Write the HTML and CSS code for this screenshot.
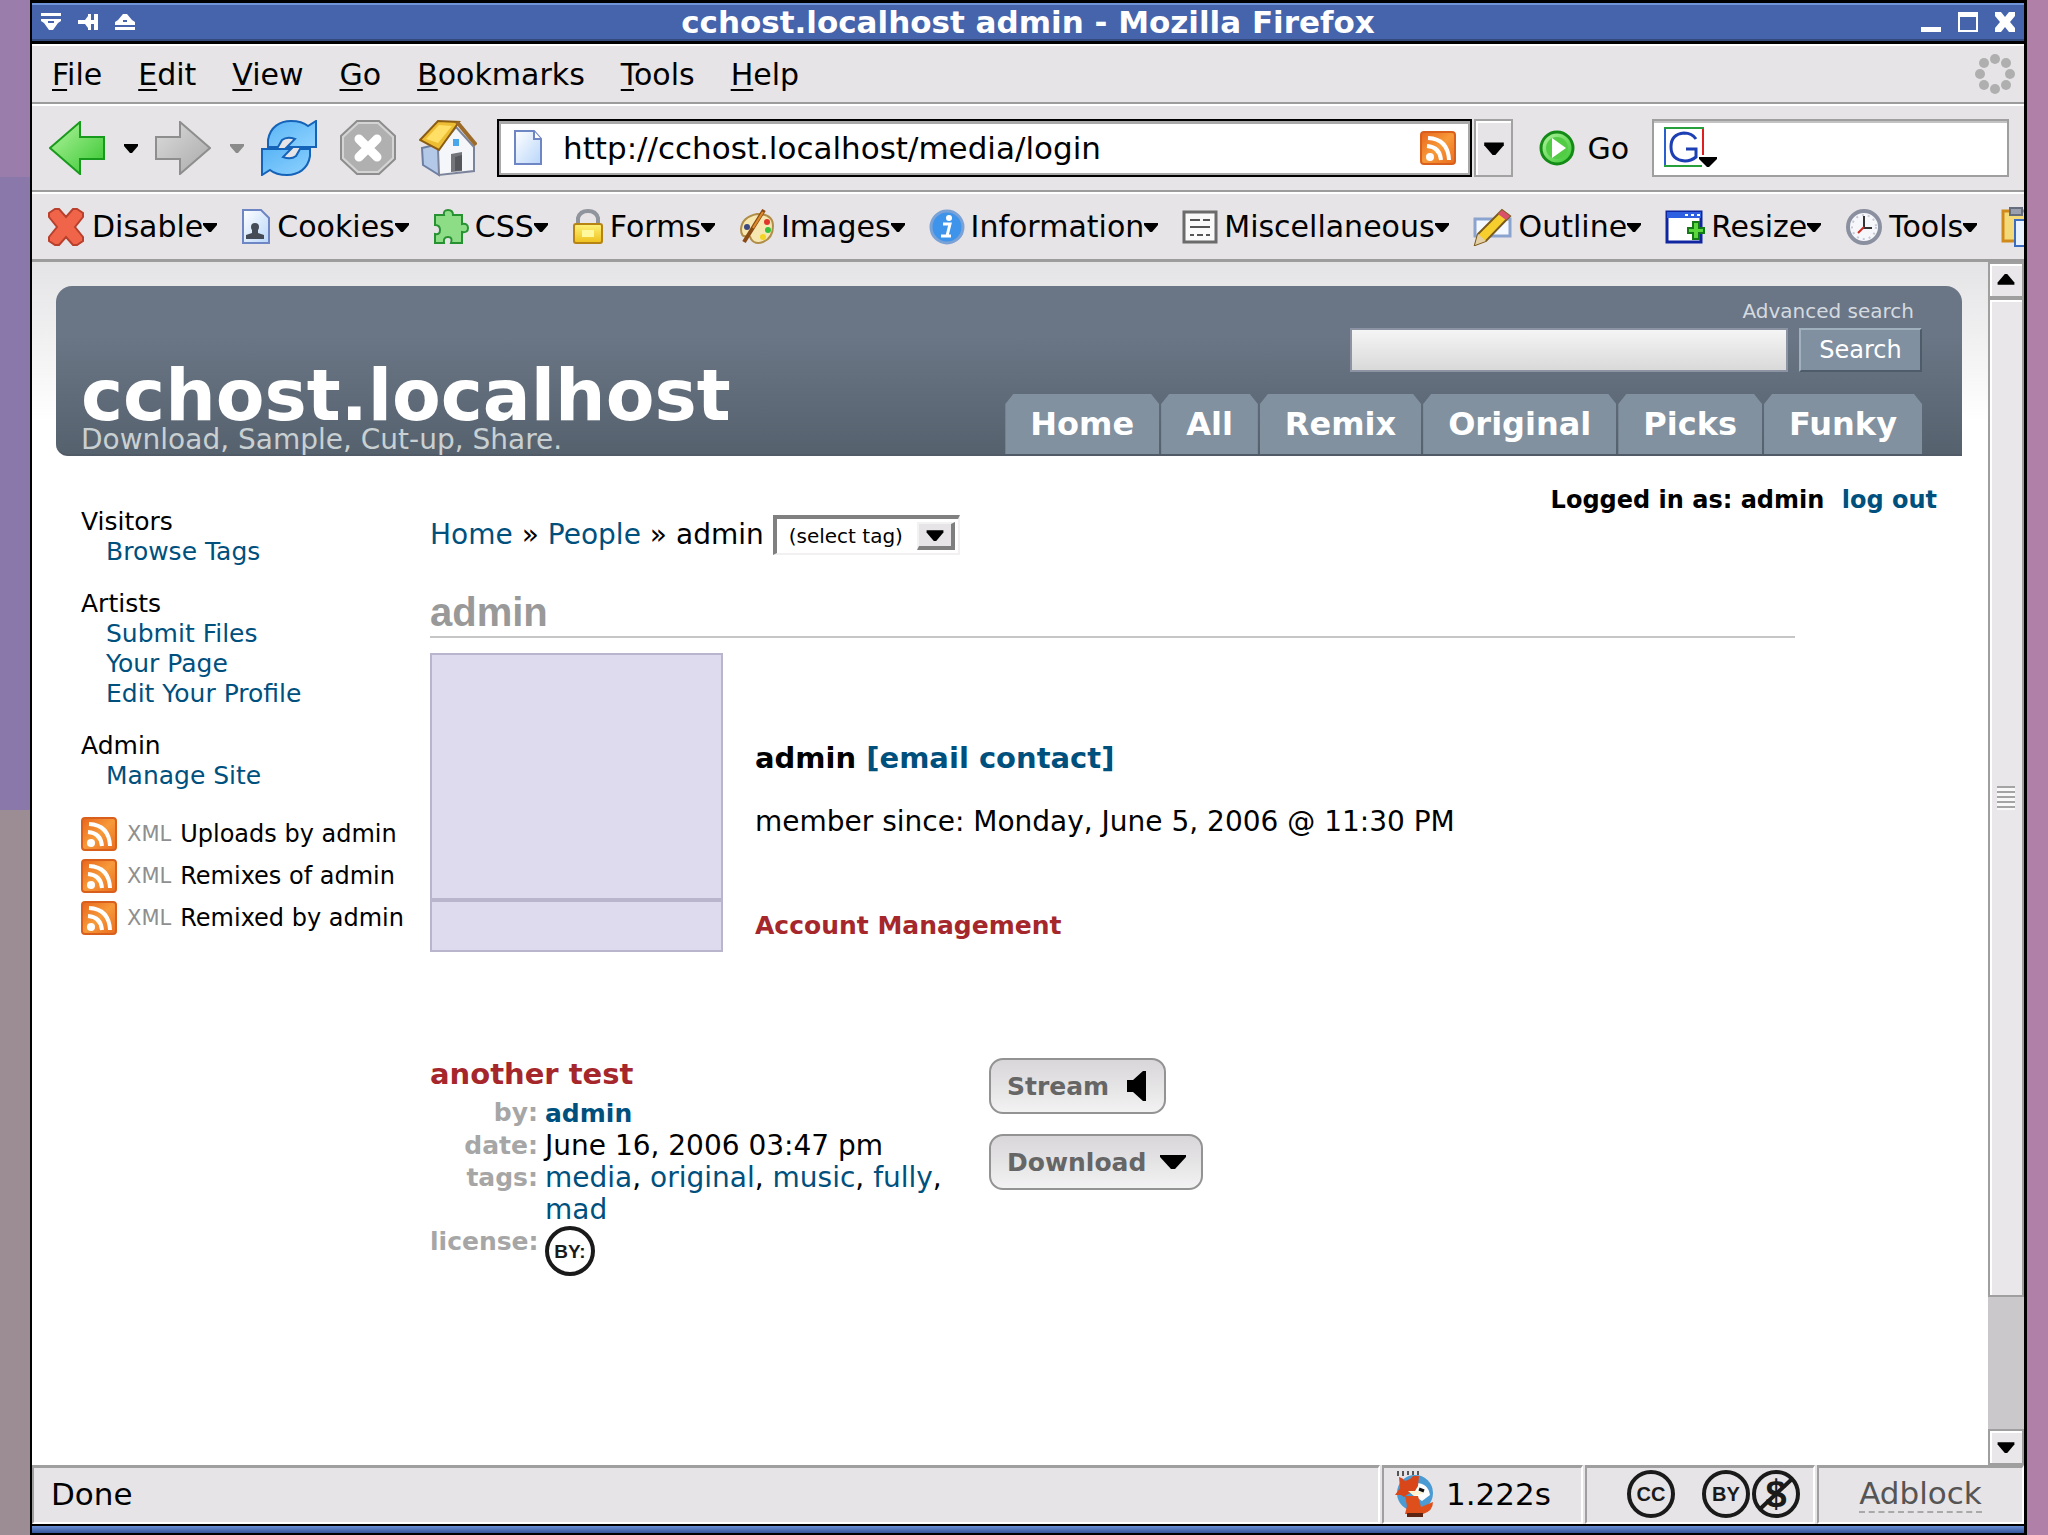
FILE: index.html
```html
<!DOCTYPE html>
<html lang="en">

<head>
    <meta charset="UTF-8">
    <meta name="viewport" content="width=device-width, initial-scale=1.0">
    <title>cchost.localhost admin</title>
    <link rel="stylesheet" href="styles.css">
</head>

<body>
    <!-- shared shapes -->
    <svg class="defs" width="0" height="0" aria-hidden="true">
        <defs>
            <linearGradient id="green" x1="0" y1="0" x2="1" y2="1">
                <stop offset="0" stop-color="#b4f5a0" />
                <stop offset="1" stop-color="#35c52e" />
            </linearGradient>
            <linearGradient id="grey" x1="0" y1="0" x2="1" y2="1">
                <stop offset="0" stop-color="#dcdcdc" />
                <stop offset="1" stop-color="#a9a9a9" />
            </linearGradient>
            <linearGradient id="blue" x1="0" y1="0" x2="1" y2="1">
                <stop offset="0" stop-color="#58b4f5" />
                <stop offset="1" stop-color="#8fd2ff" />
            </linearGradient>
            <linearGradient id="orange" x1="0" y1="0" x2="1" y2="1">
                <stop offset="0" stop-color="#e8651c" />
                <stop offset=".5" stop-color="#f79a3a" />
                <stop offset="1" stop-color="#ea6c1e" />
            </linearGradient>
            <linearGradient id="paper" x1="0" y1="0" x2="1" y2="1">
                <stop offset="0" stop-color="#ffffff" />
                <stop offset="1" stop-color="#b9d6fa" />
            </linearGradient>
            <linearGradient id="gold" x1="0" y1="0" x2="0" y2="1">
                <stop offset="0" stop-color="#fff27a" />
                <stop offset="1" stop-color="#eec01c" />
            </linearGradient>
        </defs>
        <symbol id="down" viewBox="0 0 14 10">
            <path d="M0 1h14v2L8 10H6L0 3z" />
        </symbol>
        <symbol id="rss" viewBox="0 0 36 34">
            <rect x="1" y="1" width="34" height="32" rx="3" fill="url(#orange)" stroke="#d9601c" stroke-width="2" />
            <circle cx="10" cy="26" r="4" fill="#fff" />
            <path d="M7 15q13 1 14 14M8 7q20 1 21 22" fill="none" stroke="#fff" stroke-width="4" />
        </symbol>
    </svg>

    <div class="window">
        <div class="titlebar">
            <div class="title-buttons">
                <button type="button" aria-label="Window menu"><svg width="20" height="18" viewBox="0 0 20 18"><path d="M0 0h20v3H0zM0 6h20v2l-3 2-5 7H8l-5-7-3-2zM7 8v2h6V8z" fill="#fff" fill-rule="evenodd" /></svg></button>
                <button type="button" aria-label="Stick"><svg width="20" height="18" viewBox="0 0 20 18"><path d="M0 7h7l3-4V1h3v6h3V1h4v16h-4v-6h-3v6h-3v-2l-3-4H0z" fill="#fff" /></svg></button>
                <button type="button" aria-label="Shade"><svg width="20" height="18" viewBox="0 0 20 18"><path d="M8 1h4l5 6 3 2v3H0V9l3-2zM8 7v2h4V7zM0 14h20v3H0z" fill="#fff" fill-rule="evenodd" /></svg></button>
            </div>
            <div class="title-text">cchost.localhost admin - Mozilla Firefox</div>
            <div class="title-buttons right">
                <button type="button" aria-label="Minimize"><svg width="20" height="20" viewBox="0 0 20 20"><path d="M0 15h20v5H0z" fill="#fff" /></svg></button>
                <button type="button" aria-label="Maximize"><svg width="20" height="20" viewBox="0 0 20 20"><path d="M0 0h20v20H0zM2 5v13h16V5z" fill="#fff" fill-rule="evenodd" /></svg></button>
                <button type="button" aria-label="Close"><svg width="20" height="20" viewBox="0 0 20 20"><path d="M0 0h6l4 5 4-5h6v4l-5 6 5 6v4h-6l-4-5-4 5H0v-4l5-6-5-6z" fill="#fff" /></svg></button>
            </div>
        </div>

        <div class="menubar">
            <a href="#"><u>F</u>ile</a>
            <a href="#"><u>E</u>dit</a>
            <a href="#"><u>V</u>iew</a>
            <a href="#"><u>G</u>o</a>
            <a href="#"><u>B</u>ookmarks</a>
            <a href="#"><u>T</u>ools</a>
            <a href="#"><u>H</u>elp</a>
            <svg class="throbber" width="40" height="40" viewBox="0 0 40 40" fill="#b0afb0">
                <circle cx="20" cy="5" r="5" /><circle cx="31" cy="9" r="5" /><circle cx="35" cy="20" r="5" /><circle cx="31" cy="31" r="5" />
                <circle cx="20" cy="35" r="5" /><circle cx="9" cy="31" r="5" /><circle cx="5" cy="20" r="5" /><circle cx="9" cy="9" r="5" />
            </svg>
        </div>

        <div class="toolbar">
            <button type="button" class="nav-btn" aria-label="Back">
                <svg width="56" height="54" viewBox="0 0 56 54"><path d="M1 27 31 1v15h24v22H31v15z" fill="url(#green)" stroke="#189a1c" stroke-width="2" /></svg>
                <svg class="arrow" width="14" height="10"><use href="#down" /></svg>
            </button>
            <button type="button" class="nav-btn off" aria-label="Forward">
                <svg width="56" height="54" viewBox="0 0 56 54"><path d="M55 27 25 1v15H1v22h24v15z" fill="url(#grey)" stroke="#8e8e8e" stroke-width="2" /></svg>
                <svg class="arrow" width="14" height="10"><use href="#down" /></svg>
            </button>
            <div class="nav-icons">
                <button type="button" aria-label="Reload">
                    <svg width="56" height="56" viewBox="0 0 56 56" fill="url(#blue)" stroke="#1463b8" stroke-width="2">
                        <path d="M7 27V20C9 7 19 1 30 1q11 0 17 5l8-5v26H26l8-8q-8-3-13 1l-4 7z" />
                        <path d="M49 29v7C47 49 37 55 26 55q-11 0-17-5l-8 5V29h29l-8 8q8 3 13-1l4-7z" />
                    </svg>
                </button>
                <button type="button" aria-label="Stop">
                    <svg width="56" height="56" viewBox="0 0 56 56">
                        <path d="M17 1h22l16 15v23L39 54H17L1 39V16z" fill="#b0b0b0" stroke="#8d8d8d" stroke-width="2" />
                        <path d="M18 3h20l15 14v21L38 52H18L3 38V17z" fill="none" stroke="#d4d4d4" stroke-width="2" />
                        <path d="m19 19 18 18m0-18L19 37" stroke="#fff" stroke-width="9" stroke-linecap="round" />
                    </svg>
                </button>
                <button type="button" aria-label="Home">
                    <svg width="58" height="58" viewBox="0 0 58 58">
                        <path d="M3 29 20 25v31L4 46z" fill="#b4c9e8" stroke="#6c7fa3" stroke-width="2" />
                        <path d="m19 30 18-22 18 20v24l-35 4z" fill="#f5f6fa" stroke="#7b849b" stroke-width="2" />
                        <path d="M1 21 19 2l21 1-20 28z" fill="#edbd33" stroke="#8b5d14" stroke-width="2" />
                        <path d="M7 20 20 6l13 1-14 17z" fill="#ffdf66" />
                        <path d="m38 3 19 23" stroke="#9c6b2a" stroke-width="4" />
                        <path d="M32 53V35l11-2v19z" fill="#73757b" />
                        <path d="M36 52V38l7-2v15z" fill="#55575c" />
                        <path d="M34 20h6v7h-6z" fill="#48a6ea" />
                    </svg>
                </button>
            </div>
            <div class="urlbar">
                <svg width="30" height="36" viewBox="0 0 30 36"><path d="M2 1h19l7 8v25H2z" fill="url(#paper)" stroke="#6f86c4" stroke-width="2" /><path d="M21 1v8h7" fill="#fff" stroke="#6f86c4" stroke-width="2" /></svg>
                <input type="text" aria-label="Location" value="http://cchost.localhost/media/login">
                <svg width="36" height="36"><use href="#rss" /></svg>
            </div>
            <button type="button" class="url-drop" aria-label="Show history"><svg width="22" height="14"><use href="#down" /></svg></button>
            <button type="button" class="go">
                <svg width="36" height="36" viewBox="0 0 36 36"><circle cx="18" cy="18" r="16" fill="url(#green)" stroke="#148a17" stroke-width="3" /><circle cx="18" cy="18" r="11" fill="#52cc45" /><path d="m13 8 14 10-14 10z" fill="#fff" /></svg>
                Go
            </button>
            <div class="searchbar">
                <svg width="54" height="42" viewBox="0 0 54 42">
                    <path d="M1 1v38" stroke="#2a5fd0" stroke-width="2" />
                    <path d="M0 1h40M0 39h38" stroke="#25a03a" stroke-width="2" />
                    <path d="M39 2v26" stroke="#e02020" stroke-width="2" />
                    <path d="M32 12Q28 6 20 6 7 7 7 20t14 14q6 0 11-4V22H22" fill="none" stroke="#1d3fb4" stroke-width="3" />
                    <path d="M35 30h18v2l-8 8h-2l-8-8z" />
                </svg>
                <input type="text" aria-label="Google search">
            </div>
        </div>

        <div class="devbar">
            <button type="button">
                <svg width="40" height="40" viewBox="0 0 40 40"><path d="M3 6 9 2h4l7 8 7-8h4l6 4v4l-8 10 8 10v4l-6 4h-4l-7-8-7 8H9l-6-4v-4l8-10-8-10z" fill="#f0654a" stroke="#b8402c" stroke-width="2" /></svg>
                Disable<svg class="arrow" width="14" height="10"><use href="#down" /></svg>
            </button>
            <button type="button">
                <svg width="30" height="36" viewBox="0 0 30 36"><path d="M2 1h18l8 8v25H2z" fill="url(#paper)" stroke="#6f86c4" stroke-width="2" /><circle cx="14" cy="18" r="4" fill="#444b57" /><path d="M11 20h6v4l6 2v4H5v-4l6-2z" fill="#444b57" /></svg>
                Cookies<svg class="arrow" width="14" height="10"><use href="#down" /></svg>
            </button>
            <button type="button">
                <svg width="36" height="36" viewBox="0 0 36 36"><path d="M2 6h9q-1-5 4-5t5 5h9v9q6-1 6 4t-6 4v11H18q2-6-3-6t-4 6H2V25q5 1 5-4t-5-5z" fill="#8ddc86" stroke="#279232" stroke-width="2" /></svg>
                CSS<svg class="arrow" width="14" height="10"><use href="#down" /></svg>
            </button>
            <button type="button">
                <svg width="32" height="36" viewBox="0 0 32 36"><path d="M6 17V9q2-7 10-7t10 7v8" fill="none" stroke="#8f949d" stroke-width="4" /><rect x="2" y="15" width="28" height="19" rx="2" fill="url(#gold)" stroke="#b58412" stroke-width="2" /><path d="M10 21h12v7H10z" fill="#fff89c" /></svg>
                Forms<svg class="arrow" width="14" height="10"><use href="#down" /></svg>
            </button>
            <button type="button">
                <svg width="36" height="36" viewBox="0 0 36 36"><path d="M18 5Q3 8 2 20q0 9 6 7 3-1 4 3 4 6 12 3 10-4 10-16T18 5z" fill="#f6e7b0" stroke="#b08d48" stroke-width="2" /><circle cx="8" cy="18" r="3" fill="#3d4a80" /><circle cx="28" cy="13" r="3" fill="#e1362b" /><circle cx="29" cy="21" r="3" fill="#3abf3b" /><circle cx="24" cy="28" r="3" fill="#f4d321" /><path d="M25 1 5 33" stroke="#8a4a14" stroke-width="4" /><path d="M24 3 14 19" stroke="#e08b2c" stroke-width="2" /></svg>
                Images<svg class="arrow" width="14" height="10"><use href="#down" /></svg>
            </button>
            <button type="button">
                <svg width="36" height="36" viewBox="0 0 36 36"><circle cx="18" cy="18" r="16" fill="#3e94ea" stroke="#7aa2d6" stroke-width="3" /><circle cx="20" cy="9" r="3" fill="#fff" /><path d="M14 15h7l-3 12h4M12 27h10" fill="none" stroke="#fff" stroke-width="3" /></svg>
                Information<svg class="arrow" width="14" height="10"><use href="#down" /></svg>
            </button>
            <button type="button">
                <svg width="36" height="34" viewBox="0 0 36 34"><path d="M2 2h32v30H2z" fill="#fafafa" stroke="#6b6b6b" stroke-width="3" /><path d="M8 10h10m3 0h7M8 17h20M8 25h4m3 0h6m3 0h4" stroke="#555" stroke-width="2" /></svg>
                Miscellaneous<svg class="arrow" width="14" height="10"><use href="#down" /></svg>
            </button>
            <button type="button">
                <svg width="40" height="38" viewBox="0 0 40 38"><path d="M2 11h35v17H2z" fill="#f4f8ff" stroke="#8ba4cf" stroke-width="3" /><path d="m2 37 3-11L29 2l8 6-24 25z" fill="#f6cf2e" stroke="#7a5a1a" stroke-width="2" /><path d="m29 2 8 6-4 4-8-6z" fill="#d8506a" /><path d="m2 37 3-11 8 7z" fill="#e5cfa4" /></svg>
                Outline<svg class="arrow" width="14" height="10"><use href="#down" /></svg>
            </button>
            <button type="button">
                <svg width="40" height="34" viewBox="0 0 40 34"><path d="M2 2h34v30H2z" fill="#fff" stroke="#1026a0" stroke-width="3" /><path d="M2 2h34v6H2z" fill="#2d5fe0" /><path d="M20 5h3m3 0h3m3 0h3" stroke="#fff" stroke-width="2" /><path d="M28 12h6v6h5v5h-5v6h-6v-6h-5v-5h5z" fill="#5ad63e" stroke="#147a18" stroke-width="2" /></svg>
                Resize<svg class="arrow" width="14" height="10"><use href="#down" /></svg>
            </button>
            <button type="button">
                <svg width="38" height="38" viewBox="0 0 38 38"><circle cx="19" cy="19" r="16" fill="#f6f7fb" stroke="#8b90a0" stroke-width="4" /><circle cx="19" cy="19" r="12" fill="none" stroke="#c5cad6" stroke-width="2" stroke-dasharray="2 4" /><path d="M19 8v12h8" fill="none" stroke="#333" stroke-width="2" /><path d="m19 19-6 6" stroke="#cc2a1e" stroke-width="2" /></svg>
                Tools<svg class="arrow" width="14" height="10"><use href="#down" /></svg>
            </button>
            <button type="button" aria-label="View source">
                <svg width="34" height="40" viewBox="0 0 34 40"><path d="M2 4h30v30H2z" fill="#f4d978" stroke="#d08a1c" stroke-width="3" /><path d="M9 1h12v7H9z" fill="#9aa0ad" stroke="#666d7c" stroke-width="2" /><path d="M14 13h20v26H14z" fill="#e8f3ff" stroke="#3a6cc0" stroke-width="2" /></svg>
            </button>
        </div>

        <div class="viewport">
            <div class="page">
                <div class="header">
                    <div class="brand">
                        <div class="site-title">cchost.localhost</div>
                        <div class="tagline">Download, Sample, Cut-up, Share.</div>
                    </div>
                    <div class="header-right">
                        <a class="advanced" href="#">Advanced search</a>
                        <form class="site-search">
                            <input type="text" aria-label="Search text">
                            <button type="button">Search</button>
                        </form>
                        <div class="tabs">
                            <a href="#">Home</a>
                            <a href="#">All</a>
                            <a href="#">Remix</a>
                            <a href="#">Original</a>
                            <a href="#">Picks</a>
                            <a href="#">Funky</a>
                        </div>
                    </div>
                </div>

                <div class="content">
                    <div class="sidebar">
                        <div class="menu-group">
                            <p>Visitors</p>
                            <ul>
                                <li><a href="#">Browse Tags</a></li>
                            </ul>
                        </div>
                        <div class="menu-group">
                            <p>Artists</p>
                            <ul>
                                <li><a href="#">Submit Files</a></li>
                                <li><a href="#">Your Page</a></li>
                                <li><a href="#">Edit Your Profile</a></li>
                            </ul>
                        </div>
                        <div class="menu-group">
                            <p>Admin</p>
                            <ul>
                                <li><a href="#">Manage Site</a></li>
                            </ul>
                        </div>
                        <div class="feeds">
                            <a href="#"><svg width="36" height="34"><use href="#rss" /></svg><span>XML</span>Uploads by admin</a>
                            <a href="#"><svg width="36" height="34"><use href="#rss" /></svg><span>XML</span>Remixes of admin</a>
                            <a href="#"><svg width="36" height="34"><use href="#rss" /></svg><span>XML</span>Remixed by admin</a>
                        </div>
                    </div>

                    <div class="main">
                        <div class="login-info">Logged in as: admin <a href="#">log out</a></div>
                        <div class="crumbs">
                            <a href="#">Home</a> <span>»</span> <a href="#">People</a> <span>»</span> <span>admin</span>
                            <div class="select-box">
                                <select aria-label="Tag">
                                    <option>(select tag)</option>
                                </select>
                                <i><svg width="18" height="12"><use href="#down" /></svg></i>
                            </div>
                        </div>
                        <h1>admin</h1>

                        <div class="profile">
                            <div class="avatar">
                                <div class="avatar-pic"></div>
                                <div class="avatar-foot"></div>
                            </div>
                            <div class="profile-text">
                                <h2>admin <a href="#">[email contact]</a></h2>
                                <p>member since: Monday, June 5, 2006 @ 11:30 PM</p>
                                <a class="account" href="#">Account Management</a>
                            </div>
                        </div>

                        <div class="record">
                            <div class="record-info">
                                <h2><a href="#">another test</a></h2>
                                <dl>
                                    <dt>by:</dt>
                                    <dd><a class="strong" href="#">admin</a></dd>
                                    <dt>date:</dt>
                                    <dd>June 16, 2006 03:47 pm</dd>
                                    <dt>tags:</dt>
                                    <dd><a href="#">media</a>, <a href="#">original</a>, <a href="#">music</a>, <a href="#">fully</a>, <a href="#">mad</a></dd>
                                    <dt>license:</dt>
                                    <dd>
                                        <svg class="cc" width="50" height="50" viewBox="0 0 50 50"><circle cx="25" cy="25" r="23" /><text x="25" y="32" font-size="19">BY:</text></svg>
                                    </dd>
                                </dl>
                            </div>
                            <div class="record-buttons">
                                <button type="button">Stream <svg width="26" height="30" viewBox="0 0 26 30"><path d="M4 9h6L20 0h3v30h-3l-10-9H4z" /></svg></button>
                                <button type="button">Download <svg width="26" height="16" viewBox="0 0 26 16"><path d="M0 1h26v2L15 15h-4L0 3z" /></svg></button>
                            </div>
                        </div>
                    </div>
                </div>
            </div>

            <div class="scrollbar">
                <button type="button" aria-label="Scroll up"><svg class="flip" width="18" height="12"><use href="#down" /></svg></button>
                <div class="thumb"><i></i></div>
                <div class="trough"></div>
                <button type="button" aria-label="Scroll down"><svg width="18" height="12"><use href="#down" /></svg></button>
            </div>
        </div>

        <div class="statusbar">
            <div class="cell done">Done</div>
            <div class="cell timer">
                <svg width="40" height="46" viewBox="0 0 40 46">
                    <circle cx="21" cy="22" r="18" fill="#4a9ad4" />
                    <path d="M22 12q12 0 14 12l-8 6-10-7z" fill="#fff" />
                    <path d="M5 6q4 1 6 4 6-2 8-5h6l-1 10-3 5-7 3-4 3-3-2H1l5-7z" fill="#d8461a" />
                    <path d="M4 0v5m5-5v5m5-5v4m5-4v4m5-4v4" stroke="#555" stroke-width="2" />
                    <path d="M14 20h10l6 2-10 3z" fill="#fff4d0" />
                    <path d="m25 18 5 2" stroke="#111" stroke-width="3" />
                    <path d="M11 25h13l3 11 12-5q0 9-10 12H11l2-8z" fill="#df4f1c" />
                    <path d="M13 42h16v4H13z" fill="#5b2413" />
                </svg>
                1.222s
            </div>
            <div class="cell license">
                <svg class="cc" width="50" height="50" viewBox="0 0 50 50"><circle cx="25" cy="25" r="22" /><text x="25" y="32" font-size="20">CC</text></svg>
                <div>
                    <svg class="cc" width="50" height="50" viewBox="0 0 50 50"><circle cx="25" cy="25" r="22" /><text x="25" y="32" font-size="20">BY</text></svg><svg class="cc" width="50" height="50" viewBox="0 0 50 50"><circle cx="25" cy="25" r="22" /><path d="m9 40 32-30" /><text x="25" y="38" font-size="38">$</text></svg>
                </div>
            </div>
            <div class="cell adblock"><a href="#">Adblock</a></div>
        </div>
        <div class="frame-bottom"></div>
    </div>
</body>

</html>
```
FILE: styles.css
```css
* {
    margin: 0;
    padding: 0;
    box-sizing: border-box;
}

body {
    display: flex;
    height: 100vh;
    padding: 0 21px 0 30px;
    overflow: hidden;
    font-family: "DejaVu Sans", sans-serif;
    color: #000;
    background: linear-gradient(#b080a8, #b080a8) right / 21px 100% no-repeat,
        linear-gradient(#9a7dab 0 177px, #8b78aa 177px 810px, #9c8c94 810px);
}

ul {
    list-style: none;
}

a {
    color: #00507e;
    text-decoration: none;
}

button,
input,
select {
    font-family: inherit;
    border: none;
    background: none;
    outline: none;
}

svg {
    flex-shrink: 0;
}

.defs {
    position: absolute;
}

.window {
    flex: 1;
    min-width: 0;
    display: flex;
    flex-direction: column;
    border: solid #000;
    border-width: 3px 3px 2px 2px;
    background: #e6e4e6;
}

/* title bar */
.titlebar {
    display: grid;
    grid-template-columns: 1fr auto 1fr;
    align-items: center;
    height: 41px;
    padding: 0 9px 2px;
    color: #fff;
    background: #4564ac;
    border-top: 2px solid #6f94d8;
    border-bottom: 3px solid #000;
    box-shadow: inset 0 -2px #344a7c;
}

.title-text {
    font-size: 31px;
    line-height: 34px;
    font-weight: bold;
}

.title-buttons {
    display: flex;
    gap: 17px;
}

.title-buttons button {
    display: flex;
}

.title-buttons.right {
    justify-content: flex-end;
}

/* menu and tool bars */
.menubar,
.toolbar,
.devbar {
    display: flex;
    align-items: center;
    flex-shrink: 0;
    font-size: 30px;
    border-top: 2px solid #fff;
    border-bottom: 2px solid #9d9c9d;
}

.menubar {
    height: 60px;
    gap: 36px;
    padding: 0 9px 0 20px;
}

.menubar a {
    color: #000;
}

.menubar u {
    text-decoration-thickness: 2px;
    text-underline-offset: 4px;
}

.throbber {
    margin-left: auto;
}

.toolbar {
    height: 88px;
    padding: 0 15px 0 17px;
}

.nav-btn {
    display: flex;
    align-items: center;
    gap: 19px;
    margin-right: 17px;
}

.off .arrow {
    fill: #8b8b8b;
}

.nav-icons {
    display: flex;
    gap: 23px;
}

.nav-icons button,
.url-drop {
    display: flex;
    align-items: center;
    justify-content: center;
}

.urlbar {
    flex: 1;
    display: flex;
    align-items: center;
    height: 58px;
    margin-left: 20px;
    padding: 0 14px;
    background: #fff;
    border: 2px solid #000;
    box-shadow: inset 2px 3px #aaa9aa, inset -2px -2px #aaa9aa;
}

.urlbar input {
    flex: 1;
    min-width: 0;
    margin-left: 20px;
    font-size: 31px;
}

.url-drop {
    width: 39px;
    height: 58px;
    margin-left: 2px;
    border: 2px solid #a3a2a3;
    box-shadow: inset 2px 2px #fff;
}

.go {
    display: flex;
    align-items: center;
    gap: 12px;
    margin: 0 23px 0 26px;
    font-size: 30px;
}

.searchbar {
    display: flex;
    align-items: center;
    width: 357px;
    height: 58px;
    padding: 0 10px;
    background: #fff;
    border: 2px solid #a09fa0;
    box-shadow: inset 0 2px #c4c3c4;
}

.searchbar input {
    flex: 1;
    min-width: 0;
    font-size: 30px;
}

.devbar {
    height: 70px;
    gap: 24px;
    padding-left: 14px;
    overflow: hidden;
    border-bottom-width: 3px;
}

.devbar button {
    display: flex;
    align-items: center;
    flex-shrink: 0;
    gap: 6px;
    font-size: 30px;
}

.devbar .arrow {
    margin-left: -6px;
}

/* page area */
.viewport {
    flex: 1;
    min-height: 0;
    display: flex;
}

.page {
    flex: 1;
    min-width: 0;
    padding: 24px 26px 0 24px;
    background: linear-gradient(#e4e3e5, #fff 160px);
}

.header {
    display: flex;
    justify-content: space-between;
    height: 170px;
    padding: 0 40px 0 25px;
    border-radius: 16px 16px 0 12px;
    border-bottom: 2px solid #515b67;
    background: linear-gradient(#6a7685 30%, #56616e);
}

.brand {
    display: flex;
    flex-direction: column;
    justify-content: flex-end;
    white-space: nowrap;
}

.site-title {
    color: #fff;
    font-size: 71px;
    line-height: 60px;
    font-weight: bold;
}

.tagline {
    color: #c9d0d2;
    font-size: 28px;
    line-height: 28px;
}

.header-right {
    display: flex;
    flex-direction: column;
    align-items: flex-end;
}

.advanced {
    margin: 12px 8px 0 0;
    color: #d5dae0;
    font-size: 20px;
    line-height: 26px;
}

.site-search {
    display: flex;
    gap: 11px;
    margin-top: 4px;
}

.site-search input {
    width: 438px;
    height: 44px;
    border: 2px solid #8c94a3;
    background: linear-gradient(#f4f5f4, #d8d9d8);
}

.site-search button {
    width: 123px;
    height: 44px;
    color: #fff;
    font-size: 24px;
    background: #8090a0;
    border: 2px solid;
    border-color: #a0b0bd #4e5c69 #4e5c69 #a0b0bd;
}

.tabs {
    display: flex;
    gap: 2px;
    margin-top: auto;
}

.tabs a {
    padding: 0 25px;
    color: #fff;
    font-size: 32px;
    line-height: 60px;
    font-weight: bold;
    background: #8191a0;
    clip-path: polygon(8px 0, calc(100% - 8px) 0, 100% 10px, 100% 100%, 0 100%, 0 10px);
}

.content {
    display: flex;
    padding: 0 25px;
}

/* left menu */
.sidebar {
    flex: 0 0 349px;
    padding-top: 51px;
    font-size: 25px;
    line-height: 30px;
    white-space: nowrap;
}

.menu-group {
    margin-bottom: 22px;
}

.menu-group ul {
    padding-left: 25px;
}

.feeds a {
    display: flex;
    align-items: center;
    height: 42px;
    color: #000;
    font-size: 24px;
}

.feeds span {
    margin: 0 9px 0 10px;
    color: #8f8f8f;
    font-size: 21px;
}

/* main column */
.main {
    flex: 1;
    min-width: 0;
    padding-top: 30px;
}

.login-info {
    font-size: 24px;
    line-height: 28px;
    font-weight: bold;
    text-align: right;
}

.login-info a {
    margin-left: 9px;
}

.crumbs {
    display: flex;
    align-items: center;
    gap: 9px;
    height: 41px;
    font-size: 28px;
}

.select-box {
    position: relative;
}

.select-box select {
    appearance: none;
    display: block;
    width: 187px;
    height: 40px;
    padding-left: 12px;
    font-size: 20px;
    background: #fff;
    border: solid;
    border-width: 4px 2px 2px 4px;
    border-color: #808080 #f2f0f0 #f2f0f0 #808080;
}

.select-box i {
    position: absolute;
    top: 7px;
    right: 5px;
    display: flex;
    align-items: center;
    justify-content: center;
    width: 38px;
    height: 28px;
    background: #e6e4e6;
    border: solid;
    border-width: 2px 4px 4px 2px;
    border-color: #f2f2f2 #7e7e7e #7e7e7e #f2f2f2;
    pointer-events: none;
}

h1 {
    margin: 33px 142px 15px 0;
    color: #999;
    font: bold 40px/48px "Liberation Sans", sans-serif;
    border-bottom: 2px solid #c6c6c6;
}

.profile {
    display: flex;
    gap: 32px;
}

.avatar {
    flex: 0 0 293px;
}

.avatar div {
    background: #dedbee;
    border: 2px solid #b9b5cc;
}

.avatar-pic {
    height: 247px;
}

.avatar-foot {
    height: 52px;
}

.profile-text {
    padding-top: 89px;
    font-size: 28px;
    line-height: 32px;
}

h2 {
    font-size: 29px;
    line-height: 32px;
}

.profile-text p {
    margin: 32px 0 72px;
}

.account,
.record h2 a {
    color: #a5272c;
}

.account {
    display: block;
    font-size: 25px;
    font-weight: bold;
}

.record {
    display: flex;
    margin-top: 106px;
}

.record-info {
    flex: 0 0 559px;
    padding-right: 24px;
}

.record dl {
    display: grid;
    grid-template-columns: 108px 1fr;
    column-gap: 7px;
    margin-top: 7px;
    font-size: 28px;
    line-height: 32px;
}

.record dt {
    color: #a6a6a6;
    font-size: 25px;
    font-weight: bold;
    text-align: right;
}

.strong {
    font-size: 25px;
    font-weight: bold;
}

.record-buttons {
    display: flex;
    flex-direction: column;
    align-items: flex-start;
    gap: 20px;
}

.record-buttons button {
    display: flex;
    align-items: center;
    gap: 14px;
    height: 56px;
    padding: 0 15px 0 16px;
    color: #666;
    font-size: 25px;
    font-weight: bold;
    border: 2px solid #949394;
    border-radius: 14px;
    background: linear-gradient(#d8d6d8, #f3f2f3);
}

.cc {
    display: block;
    fill: #fff;
    stroke: #1a1a1a;
    stroke-width: 4px;
}

.cc text {
    fill: #1a1a1a;
    stroke: none;
    font-family: "Liberation Sans", sans-serif;
    font-weight: bold;
    text-anchor: middle;
}

/* scroll bar */
.scrollbar {
    flex: 0 0 36px;
    display: flex;
    flex-direction: column;
}

.scrollbar button,
.thumb {
    display: flex;
    align-items: center;
    justify-content: center;
    background: #e9e7e9;
    border: 2px solid #a09fa0;
    box-shadow: inset 2px 2px #fff;
}

.scrollbar button {
    height: 36px;
}

.flip {
    transform: rotate(180deg);
}

.thumb {
    flex: 998;
}

.thumb i {
    width: 18px;
    height: 24px;
    background: repeating-linear-gradient(#a5a4a5 0 2px, #f8f8f8 2px 5px);
}

.trough {
    flex: 132;
    background: #cac8ca;
}

/* status bar */
.statusbar {
    display: flex;
    gap: 2px;
    flex-shrink: 0;
    height: 59px;
    font-size: 31px;
}

.cell {
    display: flex;
    align-items: center;
    padding-bottom: 2px;
    border: solid;
    border-width: 3px 2px 2px;
    border-color: #a09fa0 #fff #fff #a09fa0;
}

.done {
    flex: 1;
    padding-left: 17px;
}

.timer {
    width: 201px;
    padding-left: 10px;
    gap: 12px;
}

.license {
    width: 230px;
    padding-left: 39px;
    gap: 25px;
}

.license div {
    display: flex;
}

.license .cc {
    fill: none;
}

.adblock {
    width: 207px;
    justify-content: center;
}

.adblock a {
    color: #555;
    border-bottom: 2px dashed #a9a9a9;
}

.frame-bottom {
    height: 9px;
    flex-shrink: 0;
    border-top: 2px solid #000;
    background: linear-gradient(#6a90d4, #35549a);
}
```
